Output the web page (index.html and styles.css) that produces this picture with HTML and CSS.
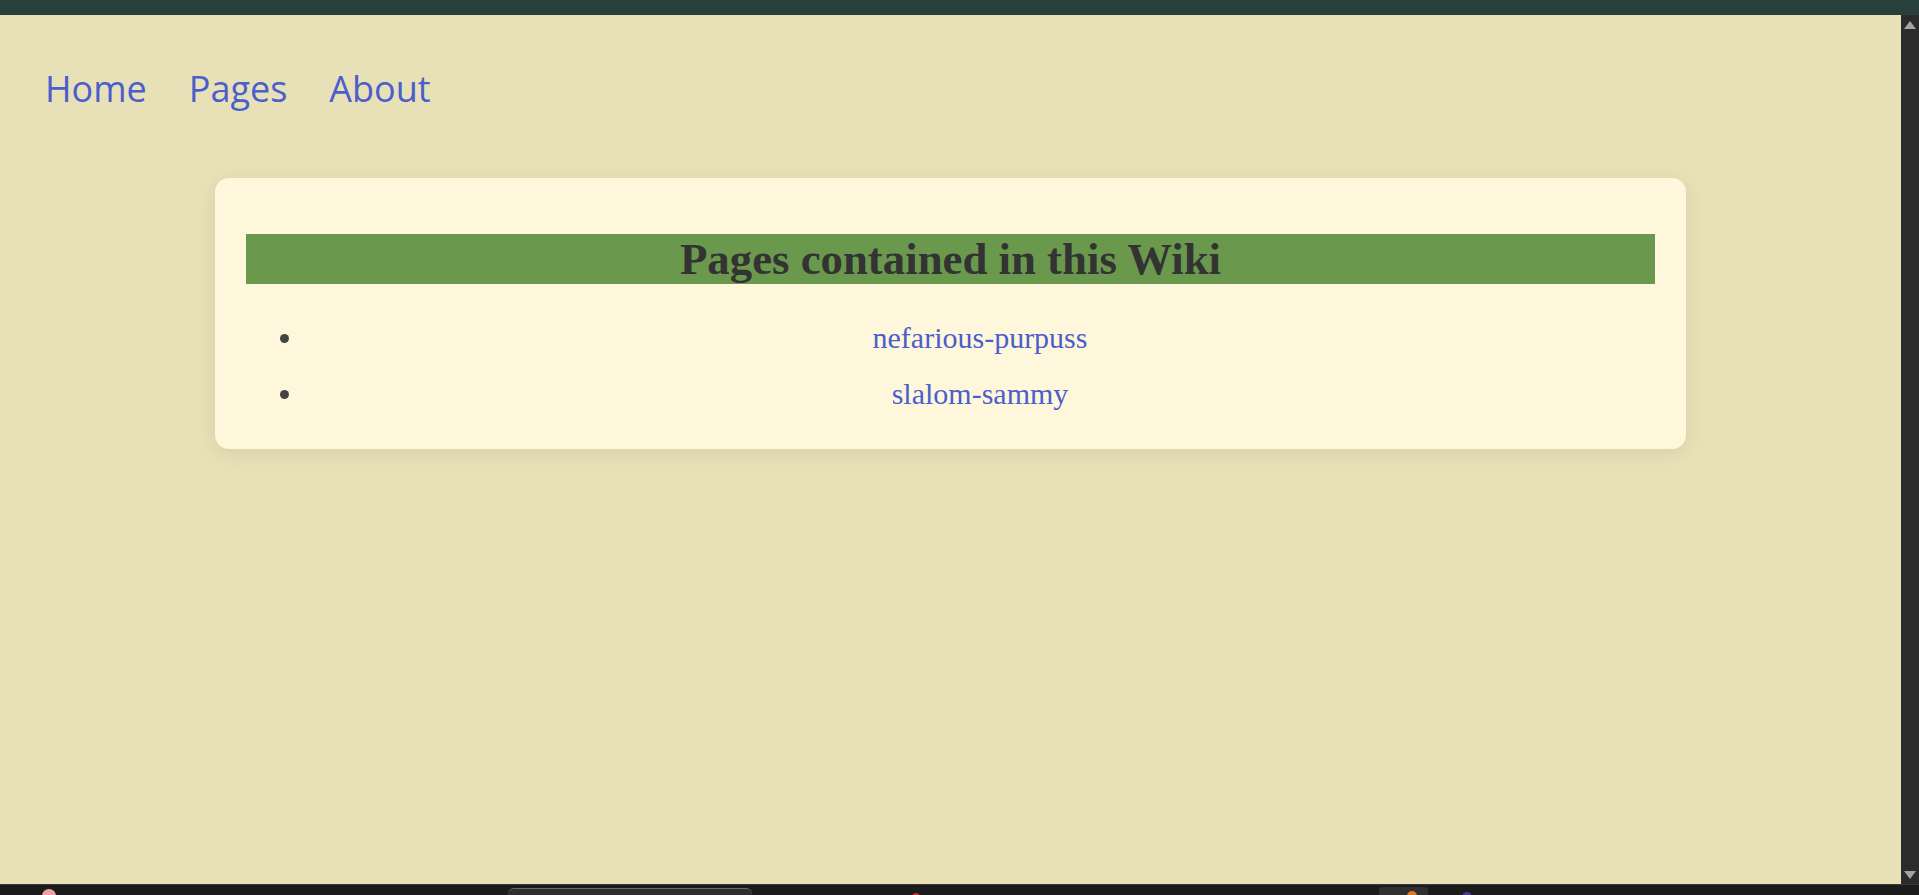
FILE: index.html
```html
<!DOCTYPE html>
<html lang="en">
<head>
<meta charset="utf-8">
<title>Pages</title>
<link rel="stylesheet" href="styles.css">
</head>
<body>
<div class="topbar"></div>
<div class="viewport">
  <div class="page">
    <nav class="nav">
      <a href="#" class="nav-link">Home</a>
      <a href="#" class="nav-link">Pages</a>
      <a href="#" class="nav-link">About</a>
    </nav>
    <main class="card">
      <h2 class="card-title">Pages contained in this Wiki</h2>
      <ul class="page-list">
        <li class="page-item"><a href="#" class="page-link">nefarious-purpuss</a></li>
        <li class="page-item"><a href="#" class="page-link">slalom-sammy</a></li>
      </ul>
    </main>
  </div>
  <div class="scrollbar">
    <span class="arrow arrow-up"></span>
    <span class="arrow arrow-down"></span>
  </div>
</div>
<div class="taskbar">
  <span class="tb-icon tb-pink"></span>
  <span class="tb-search"></span>
  <span class="tb-icon tb-red"></span>
  <span class="tb-active"><span class="tb-orange"></span></span>
  <span class="tb-icon tb-purple"></span>
</div>
</body>
</html>
```

FILE: styles.css
```css
html, body {
  margin: 0;
  padding: 0;
  height: 100%;
  overflow: hidden;
}
body {
  display: flex;
  flex-direction: column;
  background: #e8e1b8;
  font-family: "Liberation Serif", "Times New Roman", serif;
}
.topbar {
  height: 15px;
  background: #283f3c;
  flex: none;
}
.viewport {
  flex: 1;
  display: flex;
  min-height: 0;
}
.page {
  flex: 1;
  min-width: 0;
}
.nav {
  display: flex;
  gap: 42px;
  padding: 48px 0 0 45px;
}
.nav-link {
  font-family: "Open Sans", "Noto Sans", sans-serif;
  font-size: 36px;
  font-weight: 500;
  line-height: 52px;
  color: #4b5ecd;
  text-decoration: none;
}
.card {
  margin: 63px 215px 0;
  background: #fef7dc;
  border-radius: 14px;
  box-shadow: 0 4px 18px rgba(120, 100, 40, 0.14);
  padding: 25px 31px;
}
.card-title {
  margin: 31px 0 0;
  background: #6a994e;
  color: #333333;
  font-size: 44.8px;
  font-weight: bold;
  line-height: 50px;
  height: 50px;
  text-align: center;
}
.page-list {
  margin: 36px 0 13px;
  padding-left: 59px;
  color: #444444;
}
.page-item {
  font-size: 30px;
  line-height: 35px;
  text-align: center;
}
.page-item + .page-item {
  margin-top: 21px;
}
.page-link {
  color: #4b5ecd;
  text-decoration: none;
}
.scrollbar {
  width: 18px;
  flex: none;
  background: #2b2b2b;
  display: flex;
  flex-direction: column;
  justify-content: space-between;
  align-items: center;
  padding: 6px 0 5px;
  box-sizing: border-box;
}
.arrow {
  width: 0;
  height: 0;
  border-left: 6px solid transparent;
  border-right: 6px solid transparent;
}
.arrow-up {
  border-bottom: 8px solid #a3a3a3;
}
.arrow-down {
  border-top: 8px solid #a3a3a3;
}
.taskbar {
  position: relative;
  height: 11px;
  flex: none;
  background: #1c1c1c;
  border-top: 1px solid #3a3a3a;
  box-sizing: border-box;
  overflow: hidden;
}
.tb-icon {
  position: absolute;
  top: 4px;
  width: 14px;
  height: 14px;
  border-radius: 50%;
}
.tb-pink { left: 42px; background: #f0a0a8; }
.tb-red { left: 912px; top: 8px; width: 8px; height: 8px; background: #c0303a; }
.tb-purple { left: 1462px; top: 7px; width: 10px; height: 10px; background: #4a3a8a; }
.tb-search {
  position: absolute;
  left: 508px;
  top: 3px;
  width: 244px;
  height: 12px;
  border-radius: 6px;
  background: #2e2e2e;
  border-top: 1px solid #6a6a6a;
}
.tb-active {
  position: absolute;
  left: 1379px;
  top: 2px;
  width: 49px;
  height: 14px;
  border-radius: 4px;
  background: #303030;
}
.tb-orange {
  position: absolute;
  left: 28px;
  top: 4px;
  width: 10px;
  height: 10px;
  border-radius: 50%;
  background: #e07820;
}
```
